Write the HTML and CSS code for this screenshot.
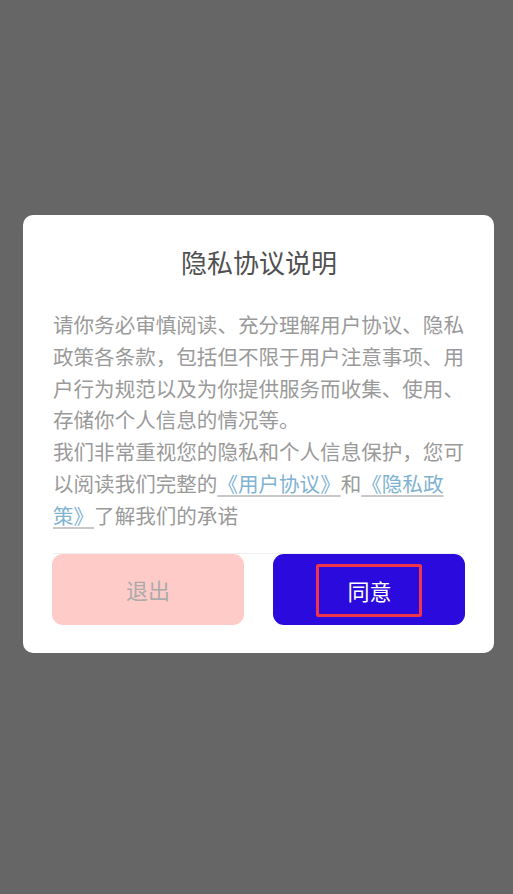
FILE: index.html
```html
<!DOCTYPE html>
<html lang="zh-CN">
<head>
<meta charset="utf-8">
<title>隐私协议说明</title>
<link rel="stylesheet" href="styles.css">
</head>
<body>
<div class="overlay">
  <div class="dialog">
    <h1 class="title">隐私协议说明</h1>
    <div class="content">
      <p>请你务必审慎阅读、充分理解用户协议、隐私政策各条款，包括但不限于用户注意事项、用户行为规范以及为你提供服务而收集、使用、存储你个人信息的情况等。</p>
      <p>我们非常重视您的隐私和个人信息保护，您可以阅读我们完整的<a class="link" href="#">《用户协议》</a>和<a class="link" href="#">《隐私政策》</a>了解我们的承诺</p>
    </div>
    <div class="actions">
      <button class="btn btn-exit">退出</button>
      <button class="btn btn-agree"><span class="mark">同意</span></button>
    </div>
  </div>
</div>
</body>
</html>
```
FILE: styles.css
```css
html, body {
  margin: 0;
  padding: 0;
  height: 100%;
}
body {
  background: #666666;
  font-family: "Noto Sans CJK SC", "Noto Sans", sans-serif;
}
.overlay {
  height: 100%;
  display: flex;
  flex-direction: column;
  justify-content: flex-start;
  padding: 215px 19px 0 23px;
  box-sizing: border-box;
}
.dialog {
  background: #ffffff;
  border-radius: 10px;
  padding: 27px 29px 28px 30px;
}
.title {
  margin: 0;
  font-size: 26px;
  font-weight: 400;
  line-height: 40px;
  text-align: center;
  color: #505050;
}
.content {
  margin-top: 27px;
  font-size: 20.55px;
  line-height: 31.8px;
  color: #9a9a9a;
}
.content p {
  margin: 0;
}
.link {
  color: #80b3d1;
  line-height: 1;
  text-decoration: underline;
  text-decoration-color: #c8c8c8;
  text-underline-offset: 3px;
}
.actions {
  margin-top: 21px;
  border-top: 1px solid #efefef;
  display: flex;
  gap: 29px;
}
.btn {
  flex: 1;
  height: 71px;
  border: none;
  border-radius: 11px;
  font-family: inherit;
  font-size: 22px;
  display: flex;
  align-items: center;
  justify-content: center;
  padding: 0;
}
.btn-exit {
  background: #ffcbc9;
  color: #ababab;
  margin-left: -1px;
}
.btn-agree {
  background: #2a0adc;
  color: #ffffff;
}
.mark {
  display: inline-block;
  border: 3px solid #f0344a;
  border-radius: 2px;
  padding: 6px 27px 7px 28px;
  line-height: 34px;
  margin-top: 3px;
}
```
